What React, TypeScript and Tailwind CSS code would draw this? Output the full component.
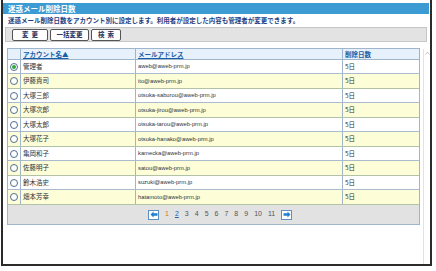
import React from "react";

const rows = [
  ["管理者", "aweb@aweb-prm.jp"],
  ["伊藤貴司", "ito@aweb-prm.jp"],
  ["大塚三郎", "otsuka-saburou@aweb-prm.jp"],
  ["大塚次郎", "otsuka-jirou@aweb-prm.jp"],
  ["大塚太郎", "otsuka-tarou@aweb-prm.jp"],
  ["大塚花子", "otsuka-hanako@aweb-prm.jp"],
  ["亀岡和子", "kamecka@aweb-prm.jp"],
  ["佐藤明子", "satou@aweb-prm.jp"],
  ["鈴木浩史", "suzuki@aweb-prm.jp"],
  ["畑本芳幸", "hatamoto@aweb-prm.jp"],
];

const jp = { fontFamily: '"Noto Sans CJK JP", "Noto Sans", sans-serif' };
const lat = { fontFamily: '"Liberation Sans", Arial, sans-serif' };

function Radio({ on }: { on?: boolean }) {
  return (
    <div className="w-[8px] h-[8px] rounded-full border border-[#4f6f90] bg-white flex items-center justify-center">
      {on && <div className="w-[4px] h-[4px] rounded-full bg-[#2fa83a]" />}
    </div>
  );
}

function ArrowBox({ dir }: { dir: "l" | "r" }) {
  return (
    <div className="w-[11px] h-[10px] border border-[#5d8fc4] bg-white flex items-center justify-center">
      <svg width="8" height="7" viewBox="0 0 8 7">
        {dir === "l" ? (
          <path d="M0.5 3.5 L3.5 0.5 L3.5 2.3 L7.5 2.3 L7.5 4.7 L3.5 4.7 L3.5 6.5 Z" fill="#1f7fd0" />
        ) : (
          <path d="M7.5 3.5 L4.5 0.5 L4.5 2.3 L0.5 2.3 L0.5 4.7 L4.5 4.7 L4.5 6.5 Z" fill="#1f7fd0" />
        )}
      </svg>
    </div>
  );
}

function Btn({ children, w }: { children: React.ReactNode; w: string }) {
  return (
    <div
      className={`${w} h-[12px] bg-white border border-[#555] rounded-[2px] flex items-center justify-center text-[6.5px] font-bold text-[#1d2f5c] leading-none`}
      style={jp}
    >
      {children}
    </div>
  );
}

export default function App() {
  return (
    <div className="w-[436px] h-[271px] bg-white overflow-hidden">
      <div className="ml-[1px] w-[431px] h-[266px] border-l-2 border-r-2 border-b-2 border-[#2b2b2b] flex flex-col">
        <div className="pt-[3px] pr-[1px]">
          <div
            className="h-[11px] bg-[#3d9bd3] pl-[5px] text-white font-bold text-[7.5px] leading-[11px]"
            style={jp}
          >
            迷惑メール削除日数
          </div>
          <div
            className="h-[13px] pl-[5px] text-[6.5px] leading-[13px] text-[#1e3e82] font-bold"
            style={jp}
          >
            迷惑メール削除日数をアカウント別に設定します。利用者が設定した内容も管理者が変更できます。
          </div>
          <div className="mx-[2px] h-[15px] bg-[#e3e3e3] border border-[#c6c6c6] flex items-center gap-[2px] pl-[6px]">
            <Btn w="w-[36px]">変&nbsp;&nbsp;更</Btn>
            <Btn w="w-[39px]">一括変更</Btn>
            <Btn w="w-[30px]">検&nbsp;&nbsp;索</Btn>
          </div>
        </div>
        <div className="flex flex-1 mt-[6px]">
          <div className="w-[420px] pl-[4px]">
            <div className="w-[413px] border border-[#9fb5cc]">
              <div className="grid grid-cols-[13px_115px_207px_76px] h-[11px] bg-[#e7f1fb] border-b border-[#9fb5cc]">
                <div className="border-r border-[#9fb5cc]" />
                <div
                  className="border-r border-[#9fb5cc] pl-[2px] text-[6.5px] leading-[10px] font-bold text-[#1a5ea8] underline"
                  style={jp}
                >
                  アカウント名▲
                </div>
                <div
                  className="border-r border-[#9fb5cc] pl-[2px] text-[6.5px] leading-[10px] font-bold text-[#1a5ea8] underline"
                  style={jp}
                >
                  メールアドレス
                </div>
                <div
                  className="pl-[2px] text-[6.5px] leading-[10px] font-bold text-[#1a5ea8]"
                  style={jp}
                >
                  削除日数
                </div>
              </div>
              {rows.map(([name, mail], i) => (
                <div
                  key={i}
                  className={`grid grid-cols-[13px_115px_207px_76px] border-b ${
                    i % 2 === 1 ? "bg-[#fdfdd8] border-[#b2c2a6]" : "bg-white border-[#a9bccf]"
                  } ${i % 2 === 0 ? "h-[14px]" : "h-[15px]"}`}
                >
                  <div className="border-r border-[#9fb5cc] flex items-center justify-center">
                    <Radio on={i === 0} />
                  </div>
                  <div
                    className="border-r border-[#9fb5cc] pl-[2px] flex items-center text-[6.5px] text-[#333]"
                    style={jp}
                  >
                    {name}
                  </div>
                  <div
                    className="border-r border-[#9fb5cc] pl-[2px] flex items-center text-[5.8px] text-[#333]"
                    style={lat}
                  >
                    {mail}
                  </div>
                  <div className="pl-[2px] flex items-center text-[6.5px] text-[#333]" style={jp}>
                    5日
                  </div>
                </div>
              ))}
              <div className="h-[19px] bg-[#e2e2e2] flex items-center pl-[140px] gap-[6px] text-[7px]" style={lat}>
                <ArrowBox dir="l" />
                <span className="text-[#e0701c]">1</span>
                <span className="text-[#1f63b4] underline">2</span>
                {["3", "4", "5", "6", "7", "8", "9", "10", "11"].map((n) => (
                  <span key={n} className="text-[#555]">
                    {n}
                  </span>
                ))}
                <ArrowBox dir="r" />
              </div>
            </div>
          </div>
          <div className="flex-1 border-l border-[#e2e2e2] mt-[1px] flex justify-center pt-[2px]">
            <svg width="5" height="4" viewBox="0 0 5 4">
              <path d="M0.5 3.5 L2.5 1 L4.5 3.5" fill="none" stroke="#b8b8b8" strokeWidth="0.8" />
            </svg>
          </div>
        </div>
      </div>
    </div>
  );
}
